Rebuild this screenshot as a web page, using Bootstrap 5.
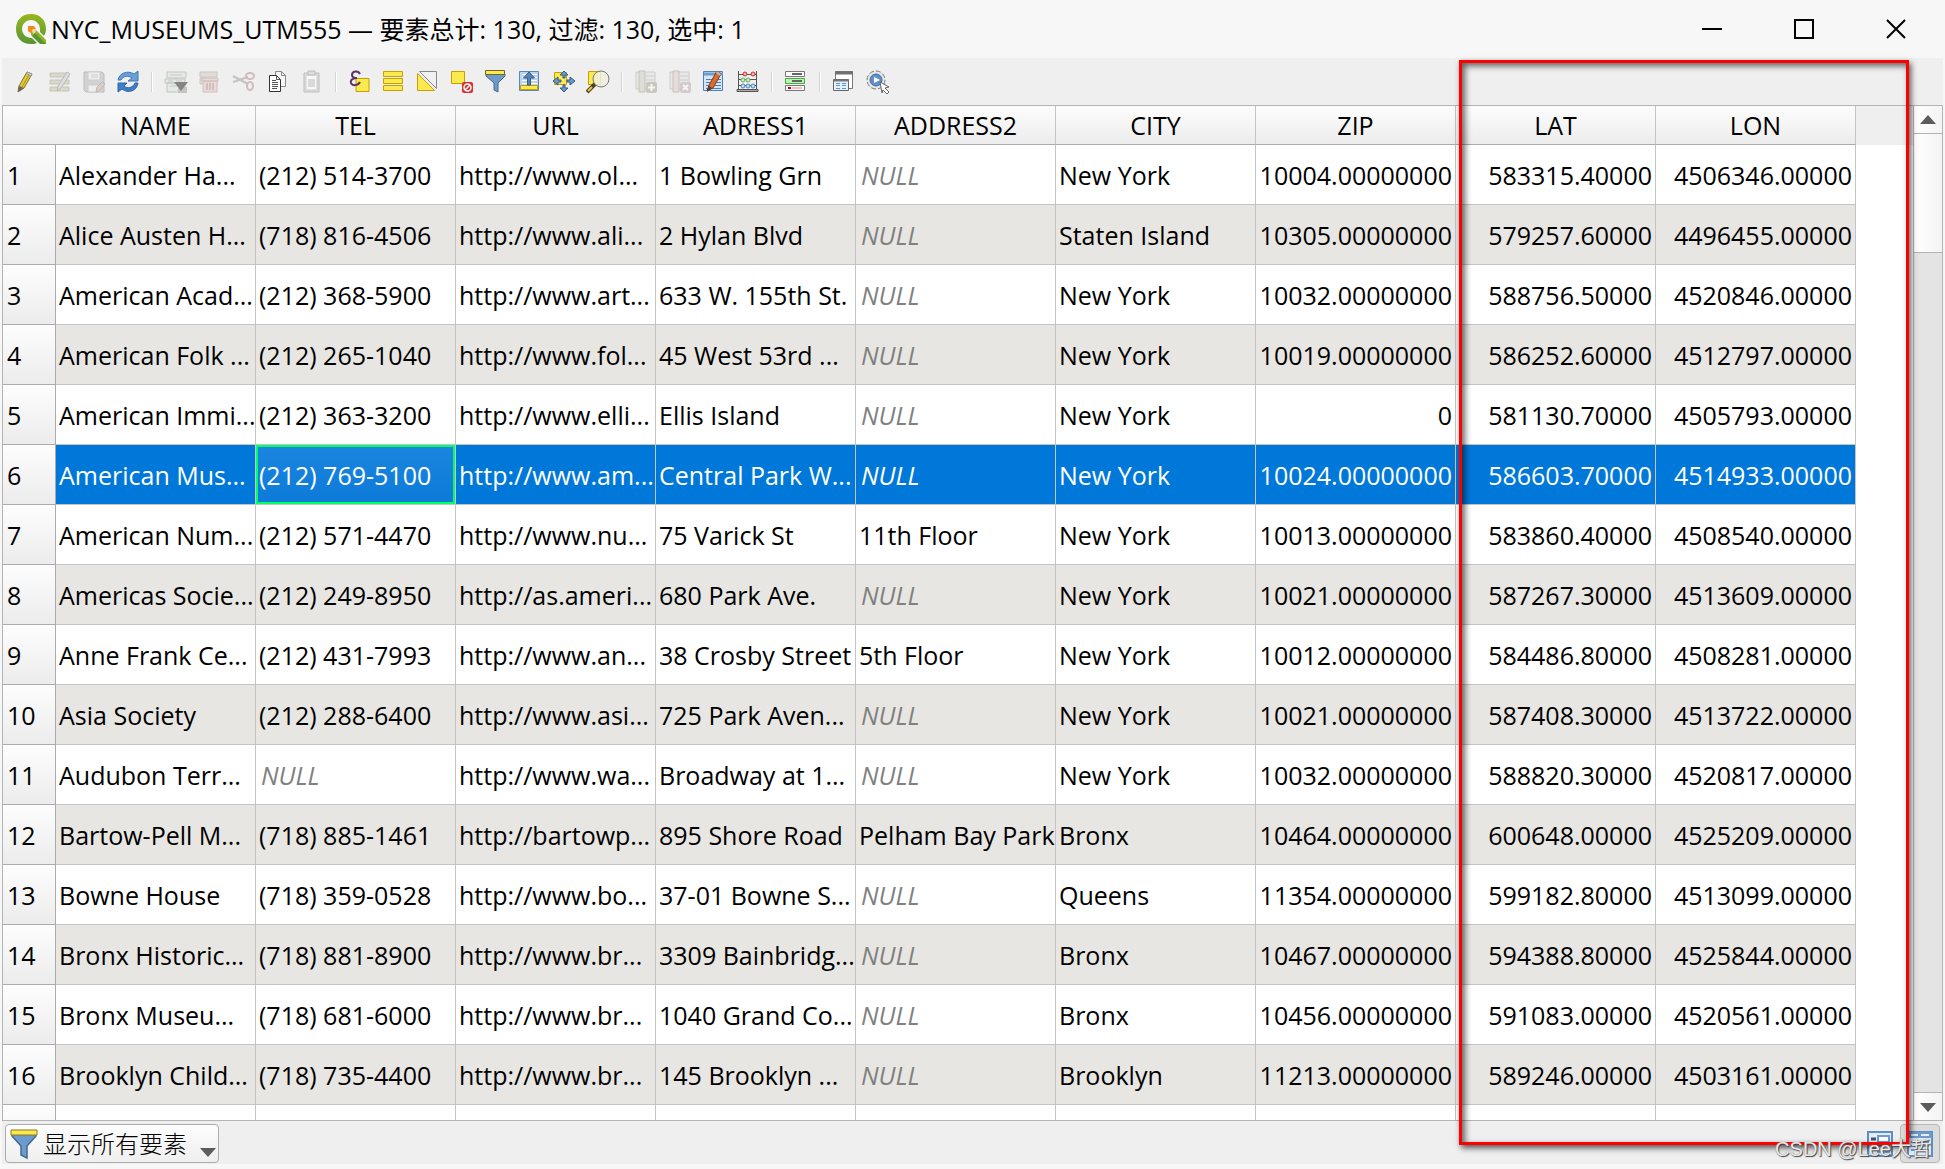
<!DOCTYPE html>
<html lang="zh-CN">
<head>
<meta charset="utf-8">
<meta name="viewport" content="width=device-width, initial-scale=1">
<title>NYC_MUSEUMS_UTM555</title>
<link href="https://cdn.jsdelivr.net/npm/bootstrap@5.3.0/dist/css/bootstrap.min.css" rel="stylesheet">
<style>
body{font-family:"Open Sans","Noto Sans CJK SC",sans-serif;font-size:25px;line-height:32px;color:#000;background:#f7f7f7}
.app-window{height:100vh;background:#f7f7f7;padding:0 2px 5px}
.title-bar{height:58px;padding-left:13px}
.title-text{font-size:25px;font-weight:400;line-height:32px}
.win-btn{width:92px;height:58px;border:0;background:none;padding:0;line-height:0}
.tool-bar{height:47px;background:#efefef;padding:0 12px;gap:10px}
.tool-btn{width:24px;height:24px;border:0;background:none;padding:0;line-height:0}
.tool-btn:disabled{opacity:1}
.tool-sep{width:2px;height:20px;background:#d4d4d4;border-right:1px solid #fff;margin:0 1px}
.grid-area{border:1px solid #b4b4b4;background:#fff;min-height:0}
.attr-grid{table-layout:fixed;border-collapse:separate;border-spacing:0;width:1853px}
.attr-grid th,.attr-grid td{height:60px;padding:0 3px;white-space:nowrap;overflow:hidden;font-weight:400;border-right:1px solid #c4c4c4;border-bottom:1px solid #c4c4c4;vertical-align:middle}
.attr-grid thead th{height:39px;text-align:center;background:linear-gradient(#fdfdfd,#ececec);border-bottom-color:#ababab;line-height:32px}
.attr-grid thead th:first-child{border-right:0}
.attr-grid tbody th{background:linear-gradient(#fdfdfd,#ececec);border-right-color:#ababab;border-bottom-color:#ababab;padding-left:4px}
.attr-grid tbody tr:nth-child(even) td{background:#e8e6e2}
.attr-grid tbody tr.picked td{background:#0078d9;color:#fff}
.attr-grid tbody tr.picked td.current{background:linear-gradient(#1b86df,#0c7ad9);box-shadow:inset 0 0 0 2px #0f6}
.attr-grid td.num{text-align:right}
.attr-grid td.nil{font-style:italic;color:#808080;padding-left:5px}
.col-idx{width:53px}
.head-rest{height:39px;background:#efefef}
.scroll-track{width:29px;background:#e4e4e4;border-left:1px solid #b4b4b4}
.scroll-btn{height:28px;border:0;padding:0;background:linear-gradient(90deg,#fff,#f4f4f4);line-height:0}
.scroll-up{border-bottom:1px solid #b4b4b4}
.scroll-down{border-top:1px solid #b4b4b4}
.scroll-thumb{height:119px;background:linear-gradient(90deg,#fff,#f4f4f4);border-bottom:1px solid #b4b4b4}
.status-bar{height:43px;background:#efefef;padding:3px 3px 0}
.filter-btn{height:39px;border:1px solid #ababab;border-radius:4px;background:linear-gradient(#fdfdfd,#efefef);padding:0 2px 0 4px;color:#000;gap:5px;font-size:24px;font-weight:300}
.view-btn{width:40px;height:39px;border:1px solid transparent;border-radius:4px;background:none;padding:0;line-height:0}
.view-on{background:#dcdcdc;border-color:#b8b8b8}
.marker-frame{right:36px;top:60px;bottom:24px;width:450px;border:3px solid #f00;box-shadow:2px 3px 6px rgba(0,0,0,.65),inset 3px 3px 6px rgba(0,0,0,.6);pointer-events:none}
.credit{right:14px;bottom:6px;font-family:"Liberation Sans","Noto Sans CJK SC",sans-serif;font-size:20px;line-height:28px;color:#e8e8e8;text-shadow:1px 1px 1px #444,0 0 1px #777;pointer-events:none}
</style>
<script src="https://cdn.jsdelivr.net/npm/bootstrap@5.3.0/dist/js/bootstrap.bundle.min.js"></script>
</head>
<body>
<div class="app-window d-flex flex-column position-relative overflow-hidden">
<header class="title-bar d-flex align-items-center flex-shrink-0">
<svg width="32" height="32" viewBox="0 0 32 32" class="flex-shrink-0" aria-hidden="true"><defs><linearGradient id="qg" x1="0" y1="0" x2="0" y2="1"><stop offset="0" stop-color="#97b81f"/><stop offset="1" stop-color="#589632"/></linearGradient></defs><path fill="url(#qg)" fill-rule="evenodd" d="M16 1C7 1 1 7 1 16s6 15 15 15c2 0 4 0 6-1l-5-5c-6 0-10-4-10-9s4-9 9-9 9 4 9 9l0 3 4 4c1-2 2-4 2-7C31 7 25 1 16 1Z"/><path fill="#93b023" d="m16 18 5-1 10 10v4h-5L16 22Z"/><path fill="#589632" d="m17 23 3-3 11 11h-6Z"/><path fill="#f08c1e" d="M13 13h6l2 3-4 1v4l-4-3Z"/><path fill="#fcd9a0" d="m17 17 3-1 1 3-3 2Z"/></svg>
<h1 class="title-text mb-0 me-auto ps-1">NYC_MUSEUMS_UTM555 — 要素总计: 130, 过滤: 130, 选中: 1</h1>
<button class="win-btn" aria-label="最小化"><svg width="22" height="22"><path d="M0 11h20" stroke="#000" stroke-width="2"/></svg></button>
<button class="win-btn" aria-label="最大化"><svg width="22" height="22"><rect x="1" y="2" width="18" height="18" fill="none" stroke="#000" stroke-width="2"/></svg></button>
<button class="win-btn" aria-label="关闭"><svg width="22" height="22"><path d="m1 2 18 18M19 2 1 20" stroke="#000" stroke-width="2"/></svg></button>
</header>
<nav class="tool-bar d-flex align-items-center flex-shrink-0" id="tools" aria-label="工具栏"></nav>
<main class="grid-area d-flex flex-grow-1 overflow-hidden">
<div class="overflow-hidden flex-shrink-0">
<table class="attr-grid"><colgroup><col class="col-idx"><col span="9"></colgroup>
<thead><tr><th></th><th>NAME</th><th>TEL</th><th>URL</th><th>ADRESS1</th><th>ADDRESS2</th><th>CITY</th><th>ZIP</th><th>LAT</th><th>LON</th></tr></thead>
<tbody id="rows"></tbody></table>
</div>
<div class="flex-grow-1"><div class="head-rest"></div></div>
<div class="scroll-track d-flex flex-column flex-shrink-0">
<button class="scroll-btn scroll-up" aria-label="向上滚动"><svg width="16" height="10"><path d="M0 9 8 0l8 9Z" fill="#5c5c5c"/></svg></button>
<div class="scroll-thumb"></div>
<button class="scroll-btn scroll-down mt-auto" aria-label="向下滚动"><svg width="16" height="10"><path d="m0 1 8 9 8-9Z" fill="#5c5c5c"/></svg></button>
</div>
</main>
<footer class="status-bar d-flex flex-shrink-0">
<button class="filter-btn d-flex align-items-center me-auto"><svg width="28" height="32" viewBox="0 0 28 32"><path d="M2 6h24v2L17 18v12l-6-3v-9L2 8Z" fill="#6d9bcb" stroke="#46688f" stroke-width="1.500"/><path d="M1 2h26v5H1Z" fill="#fce94f" stroke="#8a7a20"/></svg><span>显示所有要素</span><svg width="16" height="32" class="ms-2"><path d="M0 20h16l-8 9Z" fill="#5c5c5c"/></svg></button>
<button class="view-btn" aria-label="表单视图"><svg width="28" height="28"><path d="M2 2h24v24H2Z" fill="#e4edf7" stroke="#5e8fc4" stroke-width="2"/><path d="M5 9h5M5 19h5" stroke="#41566e" stroke-width="3"/><path d="M12 6h11v6H12zM12 16h11v6H12z" fill="#fff" stroke="#6d9bcb" stroke-width="2"/></svg></button>
<button class="view-btn view-on" aria-label="表格视图"><svg width="28" height="28"><path d="M2 2h24v24H2Z" fill="#e4edf7" stroke="#5e8fc4" stroke-width="2"/><path d="M2 5h24" stroke="#6d9bcb" stroke-width="6"/><path d="M5 5h7m3 0h8" stroke="#e4edf7" stroke-width="2"/><path d="M5 12h6m3 0h9M5 16h6m3 0h9M5 20h6m3 0h9" stroke="#6d9bcb" stroke-width="2"/></svg></button>
</footer>
<div class="marker-frame position-absolute"></div>
<div class="credit position-absolute">CSDN @Lee大哲</div>
</div>
<script>
// Toolbar: [label, drawing on a 24px canvas, disabled]; null is a separator.
const tools=[
["切换编辑模式",'<path d="m5 16 8-14 5 2-8 14-6 4Z" fill="#e3cb32" stroke="#7d7330"/><path d="m8 17 8-14" stroke="#a8922a"/><path d="m5 16-1 6 6-4Z" fill="#666"/><path d="m13 2 5 2-1 2-5-3Z" fill="#ddd" stroke="#999"/>'],
["多重编辑",'<path d="M2 3h19v4H2zM2 10h19v4H2zM2 17h19v4H2z" fill="#d8d8cb" stroke="#c6c6b8"/><path d="m9 21 1-5L19 2l3 2-9 14Z" fill="#ddd" stroke="#bbb"/>',1],
["保存编辑",'<path d="M2 2h18l2 2v18H4l-2-2Z" fill="#d2d2d2" stroke="#bbb"/><path d="M6 2h12v8H6zM6 15h12v7H6z" fill="#eee" stroke="#ccc"/><path d="M9 5h7M9 7h7" stroke="#ccc"/><path d="m14 22 1-5 5-5 3 2-6 7Z" fill="#d8cfcb" stroke="#c0b8b5"/>',1],
["重新载入表格",'<path d="M2 10C3 3 12 0 18 4l4-3v10H12l4-3C12 5 7 6 5 10Z" fill="#6b9fd8" stroke="#3f78b8"/><path d="M22 13c-1 8-10 11-16 6l-4 3V13h9l-3 3c3 3 9 2 11-3Z" fill="#3d7ec6" stroke="#2d66a8"/>'],
null,
["添加要素",'<path d="M3 2h19v6H3zM1 9h20v4H1zM3 13h18v9H3Z" fill="#e5e8e5" stroke="#c2c6c2"/><path d="M6 5h12M4 11h5m3 0h6M6 16h10" stroke="#c5cac5"/><path d="M14 17h9v6h-9z" fill="#c5c5bd"/><path d="M10 12h14l-7 9Z" fill="#858585"/>',1],
["删除选中要素",'<path d="M2 2h17v5H2zM2 8h5v6H2z" fill="#e0dcd8" stroke="#cbc6c2"/><path d="M4 8h16v3H4zM5 11h14v11H5Z" fill="#ead9d9" stroke="#d2bcbc"/><path d="M9 13v7m3-7v7m3-7v7" stroke="#ccb4b4" stroke-width="1.500"/>',1],
["剪切",'<path d="m1 6 15 8M1 12l15-5" stroke="#c4c4c4" stroke-width="2"/><ellipse cx="18" cy="6" rx="4" ry="3" fill="none" stroke="#cdbdbd" stroke-width="2"/><ellipse cx="18" cy="16" rx="3" ry="4" fill="none" stroke="#cdbdbd" stroke-width="2"/>',1],
["复制",'<path d="M9.500 1.500h6l4 4v11h-10Z" fill="#f6f6f6" stroke="#888"/><path d="M15.500 1.500v4h4" fill="none" stroke="#888"/><path d="M3.500 5.500h7l4 4v12h-11Z" fill="#fff" stroke="#333"/><path d="M10.500 5.500v4h4M6 10.500h4M6 12.500h6M6 14.500h6M6 16.500h6M6 18.500h5" fill="none" stroke="#555"/>'],
["粘贴",'<path d="M4 3h15v19H4Z" fill="#ddd" stroke="#bdbdbd"/><path d="M6 5h11v15H6Z" fill="#f7f7f7" stroke="#ccc"/><path d="M8 1h7v4H8Z" fill="#ddd" stroke="#bbb"/><path d="M8 10h7M8 12h7M8 14h7M8 16h7" stroke="#bbb"/>',1],
null,
["按表达式选择",'<path d="M8 8.500h13v13H8Z" fill="#fce94f" stroke="#c4a000"/><path d="M12 4C10 0 4 1 4 5c0 2 2 3 5 3-4 0-7 2-6 5 1 3 7 3 9-1" fill="none" stroke="#5c3566" stroke-width="2"/>'],
["全选",'<path d="M1.500 1.500h19v5h-19zM1.500 8.500h19v5h-19zM1.500 15.500h19v5h-19z" fill="#fce94f" stroke="#c4a000"/>'],
["反选",'<path d="M3.500 1.500h17v17Z" fill="#f0f0f0" stroke="#888"/><path d="M1.500 3.500v17h17Z" fill="#fce94f" stroke="#c4a000"/>'],
["取消选择",'<path d="M1.500 1.500h13v12h-13Z" fill="#fce94f" stroke="#c4a000"/><rect x="12" y="12" width="11" height="11" rx="2" fill="#d93030"/><circle cx="17.500" cy="17.500" r="3.500" fill="none" stroke="#fff" stroke-width="1.500"/><path d="m15 20 5-5" stroke="#fff" stroke-width="1.500"/>'],
["过滤",'<path d="M2 4h19v2l-7 7v9l-4-2v-7L2 6Z" fill="#6d9bcb" stroke="#46688f"/><path d="M1.500.5h19v4h-19Z" fill="#fce94f" stroke="#6f6628"/>'],
["将所选移到顶部",'<path d="M1.500 1.500h19v19h-19Z" fill="#b9d4ee" stroke="#5b86b5"/><path d="M4 4.500h15M4 7.500h15M4 10.500h15M4 13.500h15" stroke="#fff"/><path d="M2.500 15.500h17v4h-17Z" fill="#fce94f" stroke="#c4a000"/><path d="M9.500 15V8h-4l5.500-6 5.500 6h-4v7Z" fill="#5585b8" stroke="#3e5b7c"/>'],
["平移到所选",'<path d="M2.500 2.500h12v12h-12Z" fill="#fce94f" stroke="#c4a000"/><path d="m12 1 4 4h-3v3h-2V5H8ZM12 22l4-4h-3v-3h-2v3H8ZM1 11l5-4v3h3v2H6v3ZM23 11l-5-4v3h-3v2h3v3Z" fill="#6699cc" stroke="#315a87"/>'],
["缩放到所选",'<path d="M2.500 1.500h12v13h-12Z" fill="#fce94f" stroke="#c4a000"/><path d="m1 22 8-8" stroke="#4b4220" stroke-width="4"/><path d="m2 21 4-4" stroke="#edc34a" stroke-width="2"/><circle cx="15" cy="9" r="8" fill="#eeeede" fill-opacity=".85" stroke="#777"/>'],
null,
["新建字段",'<path d="M2 2h19v17H2Z" fill="#e8e8e8" stroke="#ccc"/><path d="M12 6h8m-8 4h8m-8 4h8" stroke="#ccc"/><path d="M5 1h6v21H5Z" fill="#deded6" stroke="#c4c4ba"/><rect x="12" y="12" width="11" height="11" rx="2" fill="#c8c8be"/><path d="M17.500 14v7M14 17.500h7" stroke="#f5f5f5" stroke-width="2"/>',1],
["删除字段",'<path d="M2 2h19v17H2Z" fill="#e8e8e8" stroke="#ccc"/><path d="M12 6h8m-8 4h8m-8 4h8" stroke="#ccc"/><path d="M5 1h6v21H5Z" fill="#e6dcdc" stroke="#ccbebe"/><rect x="12" y="12" width="11" height="11" rx="2" fill="#d3cbcb"/><path d="m15 15 5 5m0-5-5 5" stroke="#f5f5f5" stroke-width="2"/>',1],
["组织列",'<path d="M1.500 1.500h19v19h-19Z" fill="#d5e5f5" stroke="#4a81bd"/><path d="M2 4h19" stroke="#6d9bcb" stroke-width="3"/><path d="M4 9.500h15M4 12.500h15M4 15.500h15M4 18.500h15" stroke="#4a81bd"/><path d="M5 21 7 15 15 1l4 3-8 14Z" fill="#dc6b2d" stroke="#7d3b18"/><path d="m5 22 2-6 3 2Z" fill="#444"/><path d="m15 1 4 3-1 2-4-3Z" fill="#bbb"/>'],
["打开字段计算器",'<path d="M2.500 1v19M20.500 1v19M3 4.500h17M3 9.500h17M3 15.500h17" stroke="#555"/><path d="M1 19.500h21v2H1Z" fill="#aaa" stroke="#555"/><g fill="#f4b0b0" stroke="#cc3030"><circle cx="9" cy="4" r="2"/><circle cx="17" cy="4" r="2"/></g><g fill="#c6f0c0" stroke="#65ad5c"><circle cx="7" cy="10" r="2"/><circle cx="12" cy="10" r="2"/></g><g fill="#c0ddf5" stroke="#4c88bd"><circle cx="7" cy="16" r="2"/><circle cx="12" cy="16" r="2"/><circle cx="17" cy="16" r="2"/></g>'],
null,
["条件格式",'<path d="M1.500 1.500h19v5h-19zM1.500 15.500h19v5h-19z" fill="#fff" stroke="#777"/><path d="M1.500 8.500h19v5h-19Z" fill="#b8f5b0" stroke="#4ca844"/><path d="M8 4h10M8 11h10" stroke="#666" stroke-width="2"/><path d="M4 18h3" stroke="#c00" stroke-width="2"/><path d="M8 18h10" stroke="#fbb" stroke-width="2"/>'],
null,
["停靠属性表",'<path d="M3.500 1.500h17v17h-17Z" fill="#fff" stroke="#777"/><path d="M3 3h18" stroke="#707070" stroke-width="3"/><path d="M1.500 9.500h15v11h-15Z" fill="#e4f0fb" stroke="#666"/><path d="M2 10.500h15" stroke="#777" stroke-width="2"/><path d="M4 13.500h4m2 0h4M4 15.500h4m2 0h4M4 18.500h4m2 0h4" stroke="#5b95d0"/>'],
["动作",'<circle cx="10" cy="10" r="9" fill="#e8e8e8" stroke="#777" stroke-dasharray="5 2"/><circle cx="10" cy="10" r="6" fill="#5f92c9" stroke="#42699a"/><path d="m8 7 6 3-6 3Z" fill="#fff"/><path d="m14 12 9 5-4 1 4 4-2 2-4-4-1 3Z" fill="#fff" stroke="#666"/>']
];
document.getElementById("tools").innerHTML=tools.map(t=>t?`<button class="tool-btn" aria-label="${t[0]}"${t[2]?" disabled":""}><svg width="24" height="24" fill="none">${t[1]}</svg></button>`:'<span class="tool-sep"></span>').join("");
const N="NULL",data=[
["Alexander Ha...","(212) 514-3700","http://www.ol...","1 Bowling Grn",N,"New York","10004.00000000","583315.40000","4506346.00000"],
["Alice Austen H...","(718) 816-4506","http://www.ali...","2 Hylan Blvd",N,"Staten Island","10305.00000000","579257.60000","4496455.00000"],
["American Acad...","(212) 368-5900","http://www.art...","633 W. 155th St.",N,"New York","10032.00000000","588756.50000","4520846.00000"],
["American Folk ...","(212) 265-1040","http://www.fol...","45 West 53rd ...",N,"New York","10019.00000000","586252.60000","4512797.00000"],
["American Immi...","(212) 363-3200","http://www.elli...","Ellis Island",N,"New York","0","581130.70000","4505793.00000"],
["American Mus...","(212) 769-5100","http://www.am...","Central Park W...",N,"New York","10024.00000000","586603.70000","4514933.00000"],
["American Num...","(212) 571-4470","http://www.nu...","75 Varick St","11th Floor","New York","10013.00000000","583860.40000","4508540.00000"],
["Americas Socie...","(212) 249-8950","http://as.ameri...","680 Park Ave.",N,"New York","10021.00000000","587267.30000","4513609.00000"],
["Anne Frank Ce...","(212) 431-7993","http://www.an...","38 Crosby Street","5th Floor","New York","10012.00000000","584486.80000","4508281.00000"],
["Asia Society","(212) 288-6400","http://www.asi...","725 Park Aven...",N,"New York","10021.00000000","587408.30000","4513722.00000"],
["Audubon Terr...",N,"http://www.wa...","Broadway at 1...",N,"New York","10032.00000000","588820.30000","4520817.00000"],
["Bartow-Pell M...","(718) 885-1461","http://bartowp...","895 Shore Road","Pelham Bay Park","Bronx","10464.00000000","600648.00000","4525209.00000"],
["Bowne House","(718) 359-0528","http://www.bo...","37-01 Bowne S...",N,"Queens","11354.00000000","599182.80000","4513099.00000"],
["Bronx Historic...","(718) 881-8900","http://www.br...","3309 Bainbridg...",N,"Bronx","10467.00000000","594388.80000","4525844.00000"],
["Bronx Museu...","(718) 681-6000","http://www.br...","1040 Grand Co...",N,"Bronx","10456.00000000","591083.00000","4520561.00000"],
["Brooklyn Child...","(718) 735-4400","http://www.br...","145 Brooklyn ...",N,"Brooklyn","11213.00000000","589246.00000","4503161.00000"],
["","","","","","","","",""]];
document.getElementById("rows").innerHTML=data.map((r,i)=>`<tr${i==5?' class="picked"':""}><th scope="row">${i<16?i+1:""}</th>${r.map((v,j)=>{const c=[];if(v===N)c.push("nil");if(j>5)c.push("num");if(i==5&&j==1)c.push("current");return `<td class="${c.join(" ")}">${v}</td>`}).join("")}</tr>`).join("");
</script>
</body>
</html>
